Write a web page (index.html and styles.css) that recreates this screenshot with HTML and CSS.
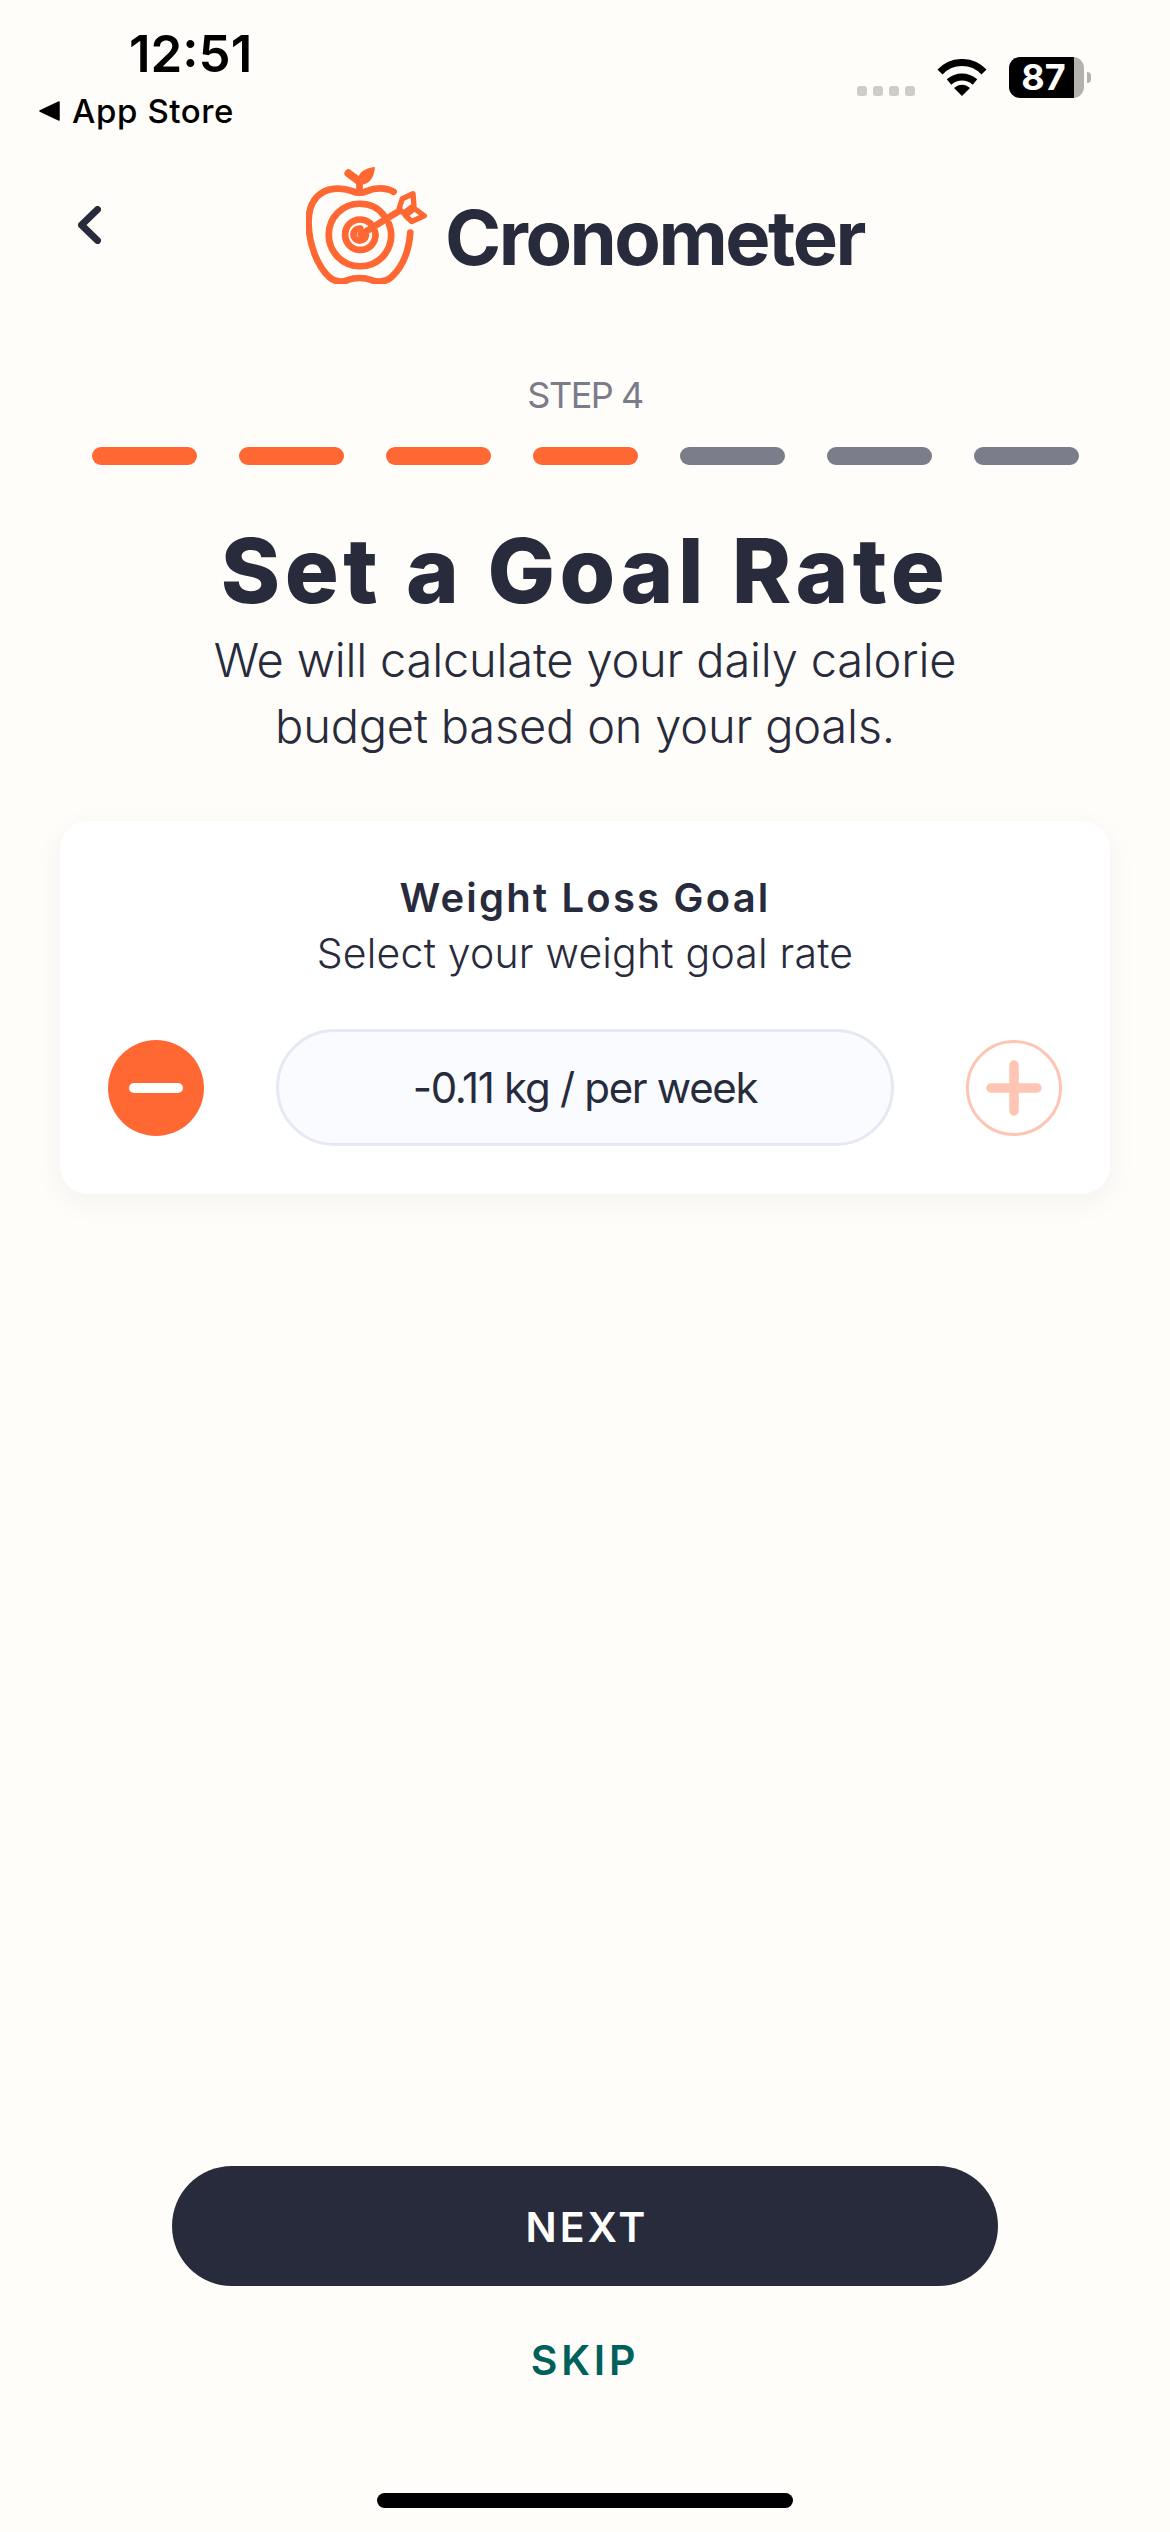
FILE: index.html
```html
<!DOCTYPE html>
<html lang="en">
<head>
  <meta charset="UTF-8">
  <meta name="viewport" content="width=device-width, initial-scale=1.0">
  <title>Cronometer - Set a Goal Rate</title>
  <link rel="stylesheet" href="styles.css">
</head>
<body>
  <div class="screen">
    <div class="status-bar">
      <div class="status-left">
        <div class="clock">12:51</div>
        <div class="back-app">
          <svg class="back-app-arrow" viewBox="0 0 21 20"><path d="M20 1v18L1 10z" fill="#000" stroke="#000" stroke-width="1.5" stroke-linejoin="round"/></svg>
          <span>App Store</span>
        </div>
      </div>
      <div class="status-right">
        <div class="signal">
          <span class="signal-dot"></span>
          <span class="signal-dot"></span>
          <span class="signal-dot"></span>
          <span class="signal-dot"></span>
        </div>
        <svg class="wifi" viewBox="0 0 50 37">
          <path d="M3 13C15 .3 35 .3 47 13" fill="none" stroke="#000" stroke-width="7"/>
          <path d="M12 23C20 16.3 30 16.3 38 23" fill="none" stroke="#000" stroke-width="7"/>
          <path d="M17 29C22 24.5 28 24.5 33 29L25 37z" fill="#000"/>
        </svg>
        <div class="battery">
          <div class="battery-body">87</div>
          <div class="battery-cap"></div>
        </div>
      </div>
    </div>

    <div class="app-header">
      <svg class="chevron" viewBox="0 0 23 38"><path d="M19.5 3.5L3.5 19l16 15.5" fill="none" stroke="#282b3b" stroke-width="7" stroke-linecap="round" stroke-linejoin="round"/></svg>
      <div class="logo">
        <svg class="logo-mark" viewBox="80 50 362 350" fill="none" stroke="#ff6733" stroke-width="20" stroke-linecap="round" stroke-linejoin="round">
          <path d="M342 124C318 110 285 112 262 122C248 128 232 128 218 122C185 110 140 110 112 140C92 162 86 190 88 225C90 280 112 345 150 380C165 394 190 396 205 388C225 380 255 380 275 388C295 396 320 394 335 380C368 350 388 300 392 246"/>
          <path d="M240 124V95"/>
          <path d="M207 69L238 92" stroke-width="24"/>
          <path d="M238 92C236 70 255 57 284 52C282 77 270 98 245 102z" fill="#ff6733" stroke-width="4"/>
          <path d="M313 195C295 170 268 160 240 160C190 160 148 200 148 253C148 305 190 347 242 347C295 347 335 305 335 253C335 240 332 230 328 220"/>
          <path d="M272 218C262 210 252 207 242 207C215 207 197 228 197 253C197 278 217 298 242 298C268 298 288 278 288 253C288 248 287 243 285 240"/>
          <path d="M242 234C230 233 222 242 222 252C222 262 231 270 241 270C250 270 257 264 259 256"/>
          <path d="M244 252L352 186"/>
          <path d="M358 176L368 145L400 130L403 165L372 188z" stroke-width="16"/>
          <path d="M378 196L404 174L434 196L396 213z" stroke-width="16"/>
        </svg>
        <span class="logo-text">Cronometer</span>
      </div>
    </div>

    <div class="step-label">STEP 4</div>
    <div class="progress">
      <span class="progress-seg done"></span>
      <span class="progress-seg done"></span>
      <span class="progress-seg done"></span>
      <span class="progress-seg done"></span>
      <span class="progress-seg"></span>
      <span class="progress-seg"></span>
      <span class="progress-seg"></span>
    </div>

    <h1 class="title">Set a Goal Rate</h1>
    <p class="subtitle">We will calculate your daily calorie<br>budget based on your goals.</p>

    <div class="goal-card">
      <div class="goal-title">Weight Loss Goal</div>
      <div class="goal-subtitle">Select your weight goal rate</div>
      <div class="goal-row">
        <button class="round-btn minus"><span class="minus-bar"></span></button>
        <div class="goal-value">-0.11 kg / per week</div>
        <button class="round-btn plus">
          <svg viewBox="0 0 56 56"><path d="M28 5v46M5 28h46" stroke="#fec5b2" stroke-width="9.5" stroke-linecap="round"/></svg>
        </button>
      </div>
    </div>

    <div class="spacer"></div>

    <button class="next-btn">NEXT</button>
    <div class="skip">SKIP</div>
    <div class="home-indicator"></div>
  </div>
</body>
</html>
```

FILE: styles.css
```css
* {
  margin: 0;
  padding: 0;
  box-sizing: border-box;
}

body {
  width: 1170px;
  height: 2532px;
  overflow: hidden;
  background: #fffdf9;
  font-family: Inter, sans-serif;
  color: #282b3b;
}

.screen {
  height: 2532px;
  display: flex;
  flex-direction: column;
  align-items: center;
}

/* status bar */
.status-bar {
  width: 100%;
  height: 142px;
  display: flex;
  justify-content: space-between;
  padding: 24px 0 0 39px;
}

.status-left {
  display: flex;
  flex-direction: column;
  align-items: flex-start;
}

.clock {
  margin-left: 90px;
  font-size: 51px;
  line-height: 60px;
  font-weight: 600;
  color: #000;
}

.back-app {
  display: flex;
  align-items: center;
  gap: 12px;
  margin-top: 6px;
  font-size: 33px;
  line-height: 42px;
  font-weight: 500;
  letter-spacing: 0.6px;
  color: #000;
}

.back-app-arrow {
  width: 21px;
  height: 20px;
}

.status-right {
  display: flex;
  align-items: flex-start;
  padding-top: 33px;
  margin-right: 79px;
}

.signal {
  display: flex;
  gap: 6px;
  margin-top: 29px;
}

.signal-dot {
  width: 10px;
  height: 10px;
  border-radius: 3px;
  background: #cfcdc9;
}

.wifi {
  width: 50px;
  height: 37px;
  margin: 2px 0 0 22px;
}

.battery {
  display: flex;
  align-items: center;
  margin-left: 22px;
}

.battery-body {
  width: 75px;
  height: 41px;
  padding-right: 6px;
  border-radius: 11px;
  background: linear-gradient(to right, #000 65px, #b4b2ae 65px);
  color: #fff;
  font-size: 36px;
  font-weight: 700;
  line-height: 41px;
  text-align: center;
}

.battery-cap {
  width: 4px;
  height: 11px;
  margin-left: 3px;
  border-radius: 0 4px 4px 0;
  background: #b4b2ae;
}

/* header */
.app-header {
  width: 100%;
  height: 166px;
  display: grid;
  grid-template-columns: 1fr auto 1fr;
  align-items: center;
}

.chevron {
  width: 23px;
  height: 38px;
  margin-left: 78px;
}

.logo {
  display: flex;
  align-items: center;
  gap: 18px;
}

.logo-mark {
  width: 121px;
  height: 117px;
}

.logo-text {
  margin-top: 24px;
  font-size: 76px;
  font-weight: 700;
  letter-spacing: -2.5px;
  color: #282b3b;
}

/* steps */
.step-label {
  margin-top: 66px;
  font-size: 36px;
  line-height: 42px;
  letter-spacing: -1.5px;
  color: #7b7c8a;
}

.progress {
  display: flex;
  gap: 42px;
  margin-top: 31px;
}

.progress-seg {
  width: 105px;
  height: 18px;
  border-radius: 9px;
  background: #7c7d8a;
}

.progress-seg.done {
  background: #ff6733;
}

.title {
  margin-top: 56px;
  font-size: 90px;
  line-height: 100px;
  font-weight: 800;
  letter-spacing: 4.4px;
  text-align: center;
}

.subtitle {
  margin-top: 6px;
  font-size: 47px;
  line-height: 66px;
  font-weight: 300;
  letter-spacing: -0.2px;
  text-align: center;
}

/* goal card */
.goal-card {
  width: 1050px;
  height: 373px;
  margin-top: 62px;
  background: #fff;
  border-radius: 28px;
  box-shadow: 0 8px 30px rgba(40, 43, 59, 0.05);
  display: flex;
  flex-direction: column;
  align-items: center;
  padding-top: 52px;
}

.goal-title {
  font-size: 40px;
  line-height: 50px;
  font-weight: 600;
  letter-spacing: 2.2px;
}

.goal-subtitle {
  margin-top: 4px;
  font-size: 41px;
  line-height: 52px;
  font-weight: 300;
  letter-spacing: 0.2px;
}

.goal-row {
  width: 100%;
  display: flex;
  align-items: center;
  justify-content: space-between;
  padding: 0 48px;
  margin-top: 50px;
}

.round-btn {
  width: 96px;
  height: 96px;
  border-radius: 50%;
  border: none;
  display: flex;
  align-items: center;
  justify-content: center;
  flex-shrink: 0;
}

.round-btn.minus {
  background: #ff6733;
}

.minus-bar {
  width: 54px;
  height: 10px;
  border-radius: 5px;
  background: #fff;
}

.round-btn.plus {
  background: #fff;
  border: 3px solid #fec5b2;
}

.round-btn.plus svg {
  width: 56px;
  height: 56px;
}

.goal-value {
  width: 618px;
  height: 117px;
  border-radius: 59px;
  border: 3px solid #e7e9f2;
  background: #fafbff;
  display: flex;
  align-items: center;
  justify-content: center;
  font-size: 42px;
  font-weight: 400;
  letter-spacing: -1.3px;
}

.spacer {
  flex: 1;
}

.next-btn {
  width: 826px;
  height: 120px;
  flex-shrink: 0;
  border: none;
  border-radius: 60px;
  background: #282b3b;
  color: #fff;
  font-family: Inter, sans-serif;
  font-size: 41px;
  font-weight: 600;
  letter-spacing: 3px;
  padding: 2px 0 0 4px;
}

.skip {
  margin-top: 49px;
  font-size: 41px;
  line-height: 50px;
  font-weight: 600;
  letter-spacing: 3.8px;
  color: #00605c;
}

.home-indicator {
  width: 416px;
  height: 15px;
  margin-top: 108px;
  margin-bottom: 24px;
  border-radius: 8px;
  background: #000;
}
```
